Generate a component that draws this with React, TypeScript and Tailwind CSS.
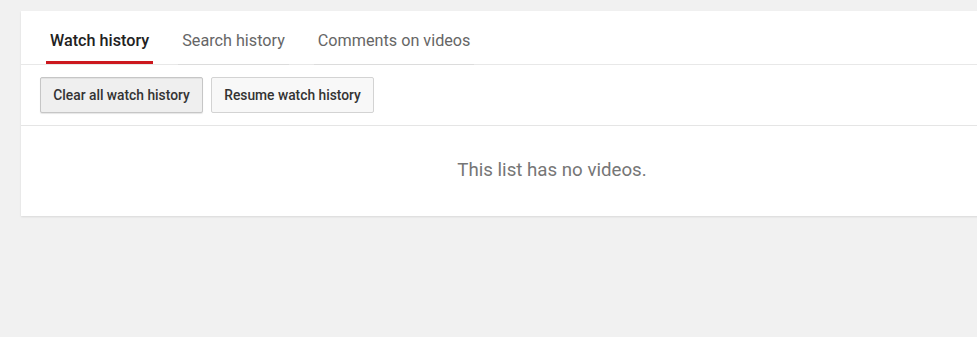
import React from "react";

export default function App() {
  const font = { fontFamily: "Roboto, 'Noto Sans', Arial, sans-serif" };
  return (
    <div className="w-[977px] h-[337px] overflow-hidden bg-[#f1f1f1] pt-[11px] pl-[21px]" style={font}>
      <div className="w-[1062px] bg-white shadow-[0_1px_2px_rgba(0,0,0,0.1)]">
        <div className="flex h-[54px] pl-[25px] border-b border-[#e8e8e8]">
          <div className="relative mr-[25px] flex h-[54px] items-center px-[4px] pt-[7px] text-[16.2px] font-medium text-[#222]">
            Watch history
            <div className="absolute left-0 right-0 bottom-[1px] h-[3px] bg-[#cc181e]" />
          </div>
          <div className="mr-[25px] flex h-[54px] items-center px-[4px] pt-[7px] text-[16.2px] text-[#666] border-b border-[#dcdcdc] -mb-px">
            Search history
          </div>
          <div className="flex h-[54px] items-center px-[4px] pt-[7px] text-[16.2px] text-[#666] border-b border-[#dcdcdc] -mb-px">
            Comments on videos
          </div>
        </div>
        <div className="flex gap-[8px] pl-[19px] pt-[12px] pb-[12px] border-b border-[#e5e5e5]">
          <button className="h-[36px] w-[163px] rounded-[2px] border border-[#c6c6c6] bg-[#efefef] text-[13.8px] font-medium text-[#333] shadow-[inset_0_1px_0_rgba(0,0,0,0.05),0_1px_1px_rgba(0,0,0,0.1)]">
            Clear all watch history
          </button>
          <button className="h-[36px] w-[163px] rounded-[2px] border border-[#d3d3d3] bg-[#f8f8f8] text-[13.8px] font-medium text-[#333]">
            Resume watch history
          </button>
        </div>
        <div className="flex h-[90px] items-center justify-center pb-[2px] text-[18.7px] text-[#767676]">
          This list has no videos.
        </div>
      </div>
    </div>
  );
}
